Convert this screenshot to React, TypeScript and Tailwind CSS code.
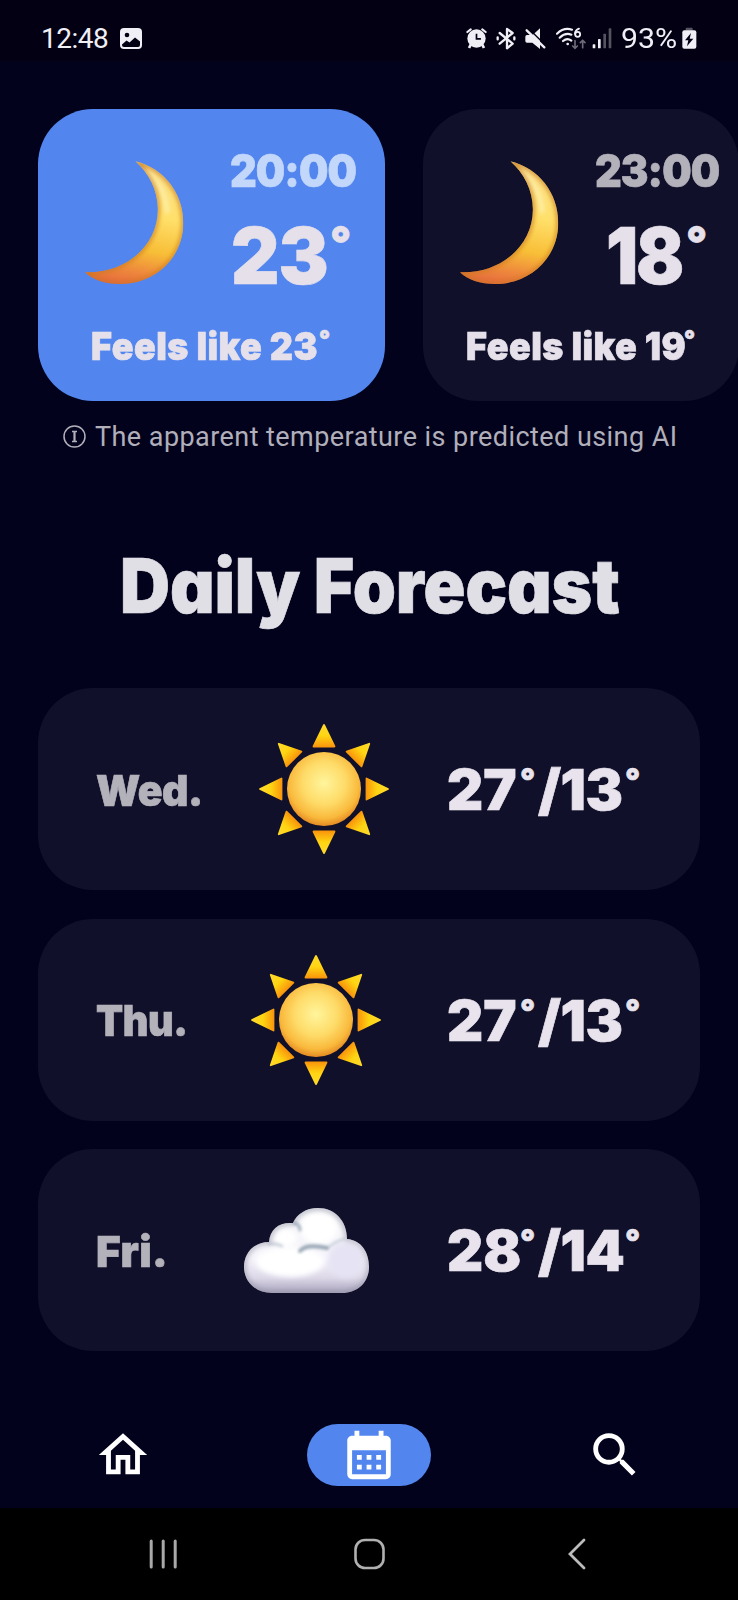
import React from "react";
import { MdCalendarMonth, MdOutlineHome, MdSearch } from "react-icons/md";

const display = "font-['Inter','Lato',sans-serif] font-black [font-feature-settings:'cv11'] [-webkit-text-stroke:0.7px_currentColor] whitespace-nowrap";

function Label({ text, box, glyphs }: { text: string; box: string; glyphs: string }) {
  return (
    <span className={`block shrink-0 ${display} ${box}`}>
      <span className={`inline-block origin-left ${glyphs}`}>{text}</span>
    </span>
  );
}

function Moon() {
  return (
    <svg className="h-[127px] w-[102px] shrink-0" viewBox="192 204 305 380" aria-hidden="true">
      <defs>
        <linearGradient id="moonFill" x1="0.45" y1="0" x2="0.3" y2="1">
          <stop offset="0" stopColor="#fbdf8c" />
          <stop offset="0.4" stopColor="#ffe06a" />
          <stop offset="0.68" stopColor="#f8be37" />
          <stop offset="0.85" stopColor="#ee8a3c" />
          <stop offset="1" stopColor="#e5643f" />
        </linearGradient>
        <filter id="moonSoft" x="-30%" y="-30%" width="160%" height="160%">
          <feGaussianBlur stdDeviation="6" />
        </filter>
        <clipPath id="moonClip">
          <path d="M346 211C430 232 489 305 489 395C489 500 405 578 300 578C255 578 218 566 195 543C315 548 413 465 413 355C413 298 386 246 346 211Z" />
        </clipPath>
      </defs>
      <g clipPath="url(#moonClip)">
        <rect x="190" y="205" width="305" height="380" fill="url(#moonFill)" />
        <path d="M380 240C415 275 438 315 440 360" fill="none" stroke="#fff6bf" strokeWidth="16" strokeLinecap="round" opacity="0.6" filter="url(#moonSoft)" />
        <path d="M346 211C430 232 489 305 489 395C489 500 405 578 300 578C255 578 218 566 195 543C315 548 413 465 413 355C413 298 386 246 346 211Z" fill="none" stroke="#c9781f" strokeWidth="11" opacity="0.8" filter="url(#moonSoft)" />
      </g>
    </svg>
  );
}

function Sun() {
  return (
    <svg className="h-[132px] w-[132px]" viewBox="-66 -66 132 132" aria-hidden="true">
      <defs>
        <radialGradient id="sunCore" cx="0.5" cy="0.42" r="0.58">
          <stop offset="0" stopColor="#fff59c" />
          <stop offset="0.5" stopColor="#fedb68" />
          <stop offset="0.82" stopColor="#f9b93c" />
          <stop offset="1" stopColor="#e58a22" />
        </radialGradient>
        <linearGradient id="sunRay" x1="0" y1="0" x2="0" y2="1">
          <stop offset="0" stopColor="#ffd92c" />
          <stop offset="0.5" stopColor="#ffd512" />
          <stop offset="1" stopColor="#f9980c" />
        </linearGradient>
      </defs>
      {[0, 45, 90, 135, 180, 225, 270, 315].map((angle) => (
        <path
          key={angle}
          d="M0 -64L10.5 -42.5H-10.5Z"
          transform={`rotate(${angle})`}
          fill="url(#sunRay)"
          stroke="url(#sunRay)"
          strokeWidth="1.8"
          strokeLinejoin="round"
        />
      ))}
      <circle r="37" fill="url(#sunCore)" />
    </svg>
  );
}

function Cloud() {
  return (
    <svg className="h-[85px] w-[125px]" viewBox="0 0 125 85" aria-hidden="true">
      <defs>
        <clipPath id="cloudClip">
          <path d="M28 85C11 85 0 73 0 59C0 45 10 34 25 34C26 22 34 15 46 15L49 15C53 6 62 0 74 0C91 0 103 13 103 31C117 32 125 44 125 59C125 74 114 85 98 85Z" />
        </clipPath>
        <linearGradient id="cloudFill" x1="0" y1="0" x2="0" y2="1">
          <stop offset="0" stopColor="#f4f6f8" />
          <stop offset="0.6" stopColor="#f6f4fb" />
          <stop offset="0.82" stopColor="#dcd8e8" />
          <stop offset="1" stopColor="#aaa5bd" />
        </linearGradient>
        <filter id="cloudSoft" x="-20%" y="-20%" width="140%" height="140%">
          <feGaussianBlur stdDeviation="2.4" />
        </filter>
        <filter id="cloudCrease" x="-20%" y="-40%" width="140%" height="180%">
          <feGaussianBlur stdDeviation="1.6" />
        </filter>
      </defs>
      <g clipPath="url(#cloudClip)">
        <rect width="125" height="85" fill="url(#cloudFill)" />
        <ellipse cx="102" cy="52" rx="18" ry="18" fill="#e6e3f4" filter="url(#cloudSoft)" />
        <ellipse cx="46" cy="54" rx="34" ry="15" fill="#ffffff" filter="url(#cloudSoft)" />
        <ellipse cx="75" cy="20" rx="19" ry="16" fill="#ffffff" filter="url(#cloudSoft)" />
        <ellipse cx="42" cy="30" rx="11" ry="9" fill="#ffffff" filter="url(#cloudSoft)" />
        <g fill="none" stroke="#8d9dad" strokeLinecap="round" filter="url(#cloudCrease)">
          <path d="M56 43C62 36 74 38 83 40" strokeWidth="4" opacity="0.9" />
          <path d="M83 40C88 37 92 33 100 31" strokeWidth="2.500" opacity="0.4" />
          <path d="M50 15C54 16 56 18 56 22" strokeWidth="3" opacity="0.8" />
          <path d="M25 36C30 35 34 36 38 38" strokeWidth="2.500" opacity="0.5" />
        </g>
        <path d="M28 85C11 85 0 73 0 59C0 45 10 34 25 34C26 22 34 15 46 15L49 15C53 6 62 0 74 0C91 0 103 13 103 31C117 32 125 44 125 59C125 74 114 85 98 85Z" fill="none" stroke="#8f90a3" strokeWidth="3.5" opacity="0.75" filter="url(#cloudSoft)" />
      </g>
    </svg>
  );
}

function StatusBar() {
  return (
    <header className="flex h-[61px] shrink-0 items-start bg-[#020012] pt-[22px] font-['Roboto',sans-serif] text-[28px] leading-[34px] text-[#f0eff6]">
      <span className="ml-[41px] w-[79px] tracking-[-0.5px]">12:48</span>
      <svg className="mt-[6px] h-[21px] w-[22px]" viewBox="0 0 22 21" aria-hidden="true">
        <rect width="22" height="21" rx="4" fill="#f0eff6" />
        <circle cx="7" cy="7" r="2.3" fill="#020012" />
        <path d="M2 16.500L6.500 12.500L9.500 14.500L15 9.500L20 13.500V17Q20 19 18 19H4Q2 19 2 17Z" fill="#020012" />
      </svg>
      <div className="ml-auto mr-[41px] flex items-start">
        <svg className="mt-[6px] h-[21px] w-[21px]" viewBox="79 84 62 62" fill="#f0eff6" aria-hidden="true">
          <circle cx="110" cy="115" r="27" />
          <path d="M83 96L93 88M137 96L127 88" stroke="#f0eff6" strokeWidth="6" strokeLinecap="round" />
          <path d="M93 133L88 143M127 133L132 143" stroke="#f0eff6" strokeWidth="8" />
          <path d="M110 101V116H123" fill="none" stroke="#020012" strokeWidth="5" />
        </svg>
        <svg className="ml-[9px] mt-[5px] h-[23px] w-[20px]" viewBox="169 80 60 69" fill="none" stroke="#f0eff6" strokeWidth="7" strokeLinejoin="round" strokeLinecap="round" aria-hidden="true">
          <path d="M180 98L219 130L202 144V86L219 98L180 130" />
          <path d="M174 111V117M224 111V117" />
        </svg>
        <svg className="ml-[9px] mt-[5px] h-[23px] w-[21px]" viewBox="257 80 63 69" fill="#f0eff6" aria-hidden="true">
          <path d="M302 84V146L279 127H263Q258 127 258 122V109Q258 104 263 104H280Z" />
          <path d="M267 84L320 136" stroke="#020012" strokeWidth="4" />
          <path d="M262 90L315 141" stroke="#f0eff6" strokeWidth="7" strokeLinecap="round" />
        </svg>
        <svg className="ml-[10px] mt-[5px] h-[23px] w-[31px]" viewBox="350 80 93 69" fill="none" stroke="#f0eff6" strokeWidth="6.500" strokeLinecap="round" aria-hidden="true">
          <path d="M353 100Q374 80 398 88M361 112Q378 96 396 103M371 122Q384 111 396 121" />
          <circle cx="385" cy="131" r="4" fill="#f0eff6" stroke="none" />
          <path d="M419 85Q407 90 407 100" strokeWidth="5.500" />
          <circle cx="415" cy="102" r="7.500" strokeWidth="5.500" />
          <path d="M407 121V143M400 137L407 144L414 137M430 142V121M423 127L430 120L437 127" stroke="#6d6b79" strokeWidth="5" />
        </svg>
        <svg className="ml-[5px] mt-[5px] h-[23px] w-[20px]" viewBox="457 80 60 69" aria-hidden="true">
          <rect x="459" y="132" width="8" height="12" rx="2" fill="#f0eff6" />
          <rect x="475" y="116" width="8" height="28" rx="2" fill="#f0eff6" />
          <rect x="491" y="100" width="8" height="44" rx="2" fill="#55535f" />
          <rect x="507" y="84" width="8" height="60" rx="2" fill="#55535f" />
        </svg>
        <span className="ml-[9px] w-[57px]">
          <span className="inline-block origin-left scale-x-[1.08]">93%</span>
        </span>
        <svg className="ml-[4px] mt-[5px] h-[22px] w-[15px]" viewBox="728 82 45 66" aria-hidden="true">
          <path d="M739 93V87Q739 84 742 84H757Q760 84 760 87V93Z" fill="#55535f" />
          <rect x="729" y="92" width="42" height="55" rx="6" fill="#f0eff6" />
          <path d="M755 100L737 122H747L743 140L762 117H751Z" fill="#020012" />
        </svg>
      </div>
    </header>
  );
}

function HourCard({ active, time, temp, feels, width, inset, tempPad, feelsPad, degreeGap, timeBox, tempGlyphs, feelsBox }: {
  active?: boolean;
  time: string;
  temp: string;
  feels: string;
  width: string;
  inset: string;
  tempPad: string;
  feelsPad: string;
  degreeGap: string;
  timeBox: string;
  tempGlyphs: string;
  feelsBox: string;
}) {
  return (
    <article className={`h-[292px] shrink-0 rounded-[55px] pt-[37px] text-[#e5e0ea] ${width} ${active ? "bg-[#5286ee]" : "bg-[#11102a]"}`}>
      <div className={`flex ${inset}`}>
        <div className="pt-[13px]">
          <Moon />
        </div>
        <div className={`flex flex-col ${timeBox}`}>
          <Label
            text={time}
            box={`h-[50px] text-[45px] leading-[50px] ${active ? "text-[#c3d7fb]" : "text-[#b3b2bb]"}`}
            glyphs="scale-x-[0.92] tracking-[-1px]"
          />
          <div className={`mt-[9px] flex h-[100px] ${tempPad}`}>
            <Label text={temp} box={`text-[79px] leading-[100px] ${degreeGap}`} glyphs={tempGlyphs} />
            <Label text="°" box="text-[46px] leading-[74px]" glyphs="" />
          </div>
        </div>
      </div>
      <div className={`mt-[16px] flex h-[50px] ${feelsPad}`}>
        <Label text={`Feels like ${feels}`} box={`text-[39px] leading-[50px] ${feelsBox}`} glyphs="scale-x-[0.92] tracking-[0.5px]" />
        <Label text="°" box="text-[24px] leading-[37px]" glyphs="" />
      </div>
    </article>
  );
}

function DayRow({ day, dayWidth, dayGlyphs, high, low, icon }: { day: string; dayWidth: string; dayGlyphs: string; high: string; low: string; icon: React.ReactNode }) {
  return (
    <article className="flex h-[202px] items-center rounded-[55px] bg-[#11102a] pl-[58px] pr-[60px]">
      <Label text={day} box={`pt-[1px] text-[43px] leading-[60px] text-[#b3b2bb] ${dayWidth}`} glyphs={dayGlyphs} />
      <div className="flex flex-1 justify-center">{icon}</div>
      <div className="mt-[2px] flex h-[60px] w-[193px] text-[#e8e3ec]">
        <Label text={high} box="w-[73px] text-[56px] leading-[60px]" glyphs="tracking-[0px]" />
        <Label text="°" box="w-[18px] text-[33px] leading-[40px]" glyphs="" />
        <Label text={`/${low}`} box="w-[87px] text-[56px] leading-[60px]" glyphs="tracking-[-0.5px]" />
        <Label text="°" box="w-[15px] text-[33px] leading-[40px]" glyphs="" />
      </div>
    </article>
  );
}

export default function App() {
  return (
    <div className="flex h-[1600px] w-[738px] flex-col overflow-hidden bg-[#03021c]">
      <StatusBar />
      <main className="flex-1">
        <section className="flex gap-[38px] overflow-hidden pl-[38px] pt-[48px]">
          <HourCard active time="20:00" temp="23" feels="23" width="w-[347px]" inset="pl-[46px]" timeBox="pl-[44px]" tempPad="pl-[1px]" degreeGap="w-[99px]" feelsPad="pl-[53px]" tempGlyphs="scale-x-[0.95] tracking-[-1px]" feelsBox="w-[228px]" />
          <HourCard time="23:00" temp="18" feels="19" width="w-[316px]" inset="pl-[36px]" timeBox="pl-[34px]" tempPad="pl-[11px]" degreeGap="w-[80px]" feelsPad="pl-[43px]" tempGlyphs="scale-x-[0.9] tracking-[-2.5px]" feelsBox="w-[218px]" />
        </section>
        <p className="flex h-[72px] items-center pl-[63px] font-['Roboto',sans-serif] text-[27px] text-[#b0afba]">
          <svg className="h-[24px] w-[24px]" viewBox="0 0 24 24" fill="none" stroke="#b0afba" aria-hidden="true">
            <circle cx="11.500" cy="11.500" r="10.500" strokeWidth="1.500" />
            <path d="M9 6.500H14M9 16.500H14" strokeWidth="1.500" />
            <path d="M11.500 6.500V16.500" strokeWidth="2.200" />
          </svg>
          <span className="ml-[8px] whitespace-nowrap tracking-[0.44px]">The apparent temperature is predicted using AI</span>
        </p>
        <h1 className="flex h-[215px] items-center pl-[120px] pt-[8px] text-[#e0dfe6]">
          <Label text="Daily Forecast" box="w-[500px] text-[76px] leading-[90px]" glyphs="scale-x-[0.91] tracking-[-0.1px]" />
        </h1>
        <section className="flex flex-col gap-[28.500px] px-[38px]">
          <DayRow day="Wed." dayWidth="w-[104px]" dayGlyphs="scale-x-[0.95] tracking-[-0.5px]" high="27" low="13" icon={<Sun />} />
          <DayRow day="Thu." dayWidth="w-[89px]" dayGlyphs="scale-x-[0.92] tracking-[-0.5px]" high="27" low="13" icon={<Sun />} />
          <DayRow day="Fri." dayWidth="w-[69px]" dayGlyphs="scale-x-[0.98] tracking-[0.4px]" high="28" low="14" icon={<Cloud />} />
        </section>
      </main>
      <nav className="grid h-[104px] shrink-0 grid-cols-3 items-center justify-items-center pb-[2px] text-white">
        <MdOutlineHome size={58} />
        <span className="flex h-[62px] w-[124px] items-center justify-center rounded-full bg-[#5286ee]">
          <MdCalendarMonth size={58} />
        </span>
        <MdSearch size={58} />
      </nav>
      <footer className="flex h-[92px] shrink-0 items-center bg-black">
        <svg className="ml-[148px] h-[32px] w-[30px]" viewBox="0 0 30 32" stroke="#a9a9a9" strokeWidth="3" strokeLinecap="round" aria-hidden="true">
          <path d="M3.200 3V29M15.200 3V29M27.200 3V29" />
        </svg>
        <svg className="ml-[175px] h-[32px] w-[32px]" viewBox="0 0 32 32" fill="none" stroke="#b0b0b0" strokeWidth="2.600" aria-hidden="true">
          <rect x="2.500" y="2" width="28" height="28" rx="9.500" />
        </svg>
        <svg className="ml-[182px] h-[32px] w-[20px]" viewBox="0 0 20 32" fill="none" stroke="#bcbcbc" strokeWidth="2.800" strokeLinecap="round" aria-hidden="true">
          <path d="M17 2L3 16L17 30" />
        </svg>
      </footer>
    </div>
  );
}
